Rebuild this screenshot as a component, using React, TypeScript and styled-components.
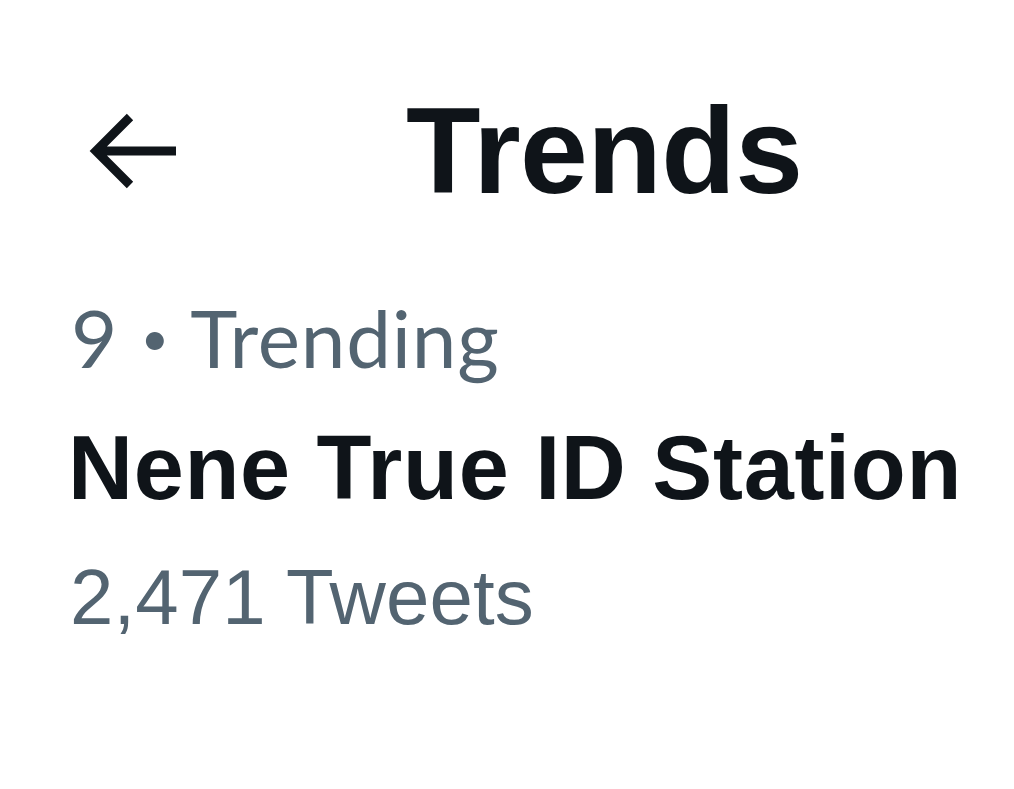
import React from "react";
import styled, { createGlobalStyle } from "styled-components";

const Global = createGlobalStyle`
  html, body { margin: 0; padding: 0; background: #ffffff; }
  body { font-family: "Liberation Sans", Arial, sans-serif; }
`;

const Page = styled.div`
  width: 1014px;
  height: 789px;
  background: #ffffff;
  display: flex;
  flex-direction: column;
  overflow: hidden;
`;

const Header = styled.header`
  display: flex;
  align-items: center;
  height: 140px;
  margin-top: 81px;
  padding-left: 84px;
  gap: 226px;
`;

const BackButton = styled.button`
  display: flex;
  align-items: center;
  justify-content: center;
  width: 96px;
  height: 84px;
  padding: 0;
  border: none;
  background: transparent;
  color: #0f1419;
`;

const Title = styled.h1`
  margin: 0;
  font-family: "Liberation Sans", Arial, sans-serif;
  font-weight: 700;
  font-size: 122px;
  line-height: 140px;
  letter-spacing: -0.6px;
  color: #0f1419;
`;

const Trend = styled.section`
  display: flex;
  flex-direction: column;
  padding-left: 68px;
`;

const Meta = styled.div<{ $gap?: number }>`
  margin-top: ${(p) => p.$gap ?? 0}px;
  padding-left: 3px;
  font-family: Lato, "Liberation Sans", sans-serif;
  font-size: 80px;
  line-height: 96px;
  letter-spacing: 0.8px;
  color: #536471;
  white-space: nowrap;
`;

const Dot = styled.span`
  display: inline-block;
  font-size: 120px;
  line-height: 0;
  vertical-align: -9px;
  margin: 0 19px 0 21px;
`;

const Name = styled.div<{ $gap: number }>`
  margin-top: ${(p) => p.$gap}px;
  font-family: "Liberation Sans", Arial, sans-serif;
  font-weight: 700;
  font-size: 90px;
  line-height: 100px;
  letter-spacing: 0.7px;
  color: #0f1419;
  white-space: nowrap;
`;

const Count = styled.div<{ $gap: number }>`
  margin-top: ${(p) => p.$gap}px;
  padding-left: 2px;
  font-family: "Liberation Sans", Arial, sans-serif;
  font-size: 78px;
  line-height: 90px;
  letter-spacing: 0.1px;
  color: #536471;
`;

const BackArrow = () => (
  <svg width="96" height="84" viewBox="0 0 96 84" fill="none">
    <path
      d="M46 8 L12 42 L46 76 M12 42 H92"
      stroke="currentColor"
      strokeWidth="9"
      strokeLinejoin="miter"
      strokeLinecap="butt"
    />
  </svg>
);

export default function App() {
  return (
    <Page>
      <Global />
      <Header>
        <BackButton aria-label="Back">
          <BackArrow />
        </BackButton>
        <Title>Trends</Title>
      </Header>
      <Trend>
        <Meta $gap={68}>
          9<Dot>·</Dot>Trending
        </Meta>
        <Name $gap={33}>Nene True ID Station</Name>
        <Count $gap={34}>2,471 Tweets</Count>
      </Trend>
    </Page>
  );
}
